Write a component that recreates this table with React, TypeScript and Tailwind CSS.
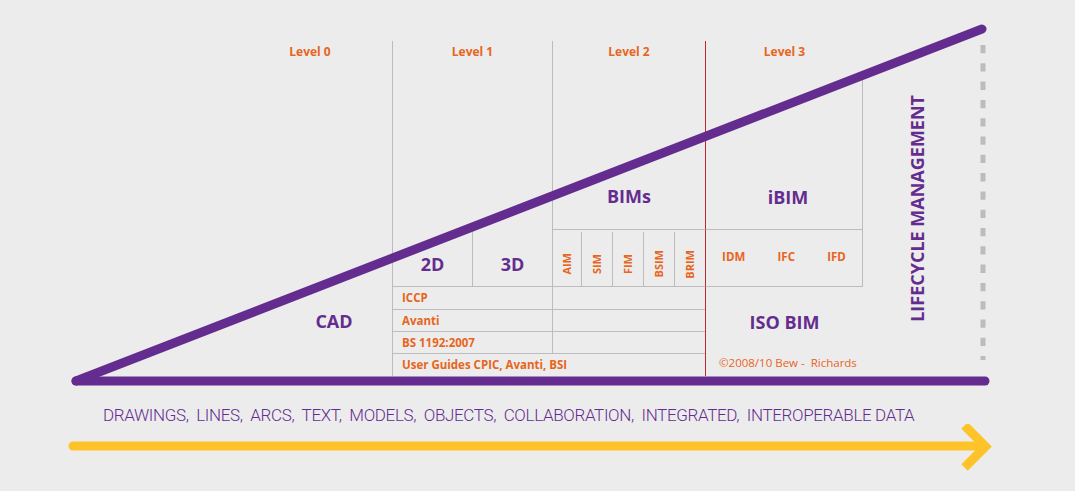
import React from "react";

const PURPLE = "text-[#652c90]";
const ORANGE = "text-[#e8651c]";

function Small({ children, className = "" }: { children: React.ReactNode; className?: string }) {
    return <span className={`font-bold leading-[14px] text-[#e8651c] ${className}`}>{children}</span>;
}

function Big({ children, className = "" }: { children: React.ReactNode; className?: string }) {
    return <span className={`text-[18px] font-bold leading-6 text-[#652c90] ${className}`}>{children}</span>;
}

function LevelLabel({ children }: { children: React.ReactNode }) {
    return <p className={`pt-[3px] text-center text-[12px] font-bold leading-4 ${ORANGE}`}>{children}</p>;
}

const subModels = ["AIM", "SIM", "FIM", "BSIM", "BRIM"];
const standards = ["IDM", "IFC", "IFD"];

export default function App() {
    return (
        <div
            className="flex h-[491px] w-[1075px] flex-col overflow-hidden bg-[#ececec]"
            style={{ fontFamily: '"Open Sans", "Noto Sans", sans-serif' }}
        >
            <div className="relative h-[392px] pt-[41px]">
                <div className="grid h-[335px] grid-cols-[392px_80px_80px_153px_158px_1fr] grid-rows-[188px_57px_23px_22px_22px_23px]">
                    {/* Level 0 */}
                    <div className="col-start-1 row-span-6 row-start-1 flex flex-col">
                        <div className="ml-[270px] w-[80px]">
                            <LevelLabel>Level 0</LevelLabel>
                        </div>
                        <div className="mb-[42px] ml-[300px] mt-auto w-[68px] text-center">
                            <Big>CAD</Big>
                        </div>
                    </div>

                    {/* Level 1 */}
                    <div className="col-span-2 col-start-2 row-start-1 border-l border-[#bcbcbc]">
                        <LevelLabel>Level 1</LevelLabel>
                    </div>
                    <div className="col-start-2 row-start-2 flex items-center justify-center border-l border-[#bcbcbc] pt-[12px]">
                        <Big>2D</Big>
                    </div>
                    <div className="col-start-3 row-start-2 flex items-center justify-center border-l border-[#bcbcbc] pt-[12px]">
                        <Big>3D</Big>
                    </div>
                    <div className="col-span-2 col-start-2 row-start-3 flex items-center border-l border-t border-[#bcbcbc] pl-[9px]">
                        <Small className="text-[11.5px]">ICCP</Small>
                    </div>
                    <div className="col-span-2 col-start-2 row-start-4 flex items-center border-l border-t border-[#bcbcbc] pl-[9px]">
                        <Small className="text-[11.5px]">Avanti</Small>
                    </div>
                    <div className="col-span-2 col-start-2 row-start-5 flex items-center border-l border-t border-[#bcbcbc] pl-[9px]">
                        <Small className="text-[11.5px]">BS 1192:2007</Small>
                    </div>
                    <div className="col-span-3 col-start-2 row-start-6 flex items-center border-l border-t border-[#bcbcbc] pl-[9px]">
                        <Small className="text-[11.5px]">User Guides CPIC, Avanti, BSI</Small>
                    </div>

                    {/* Level 2 */}
                    <div className="col-start-4 row-start-1 flex flex-col border-l border-[#bcbcbc]">
                        <LevelLabel>Level 2</LevelLabel>
                        <div className="mb-[20px] mt-auto text-center">
                            <Big>BIMs</Big>
                        </div>
                    </div>
                    <div className="col-start-4 row-start-2 grid grid-cols-[28px_31px_31px_31px_31px] border-l border-t border-[#bcbcbc]">
                        {subModels.map((m, i) => (
                            <div
                                key={m}
                                className={`mt-[2px] flex items-center justify-center pt-[10px] ${i > 0 ? "border-l border-[#bcbcbc]" : ""}`}
                            >
                                <Small className="rotate-180 text-[11px] [writing-mode:vertical-rl]">{m}</Small>
                            </div>
                        ))}
                    </div>
                    <div className="col-start-4 row-start-3 border-l border-t border-[#bcbcbc]" />
                    <div className="col-start-4 row-start-4 border-l border-t border-[#bcbcbc]" />
                    <div className="col-start-4 row-start-5 border-l border-t border-[#bcbcbc]" />

                    {/* Level 3 */}
                    <div className="col-start-5 row-start-1 flex flex-col border-l border-[#c1272d]">
                        <div className="h-[39px]">
                            <LevelLabel>Level 3</LevelLabel>
                        </div>
                        <div className="flex flex-1 items-end justify-center border-r border-[#bcbcbc] pb-[20px] pl-[8px]">
                            <Big>iBIM</Big>
                        </div>
                    </div>
                    <div className="col-start-5 row-start-2 flex items-center justify-around border-l border-r border-t border-[#bcbcbc] border-l-[#c1272d] pb-[2px]">
                        {standards.map((s) => (
                            <Small key={s} className="text-[11.5px]">
                                {s}
                            </Small>
                        ))}
                    </div>
                    <div className="col-start-5 row-span-4 row-start-3 flex flex-col border-l border-t border-[#bcbcbc] border-l-[#c1272d]">
                        <div className="pt-[23px] text-center">
                            <Big>ISO BIM</Big>
                        </div>
                        <p className={`mt-[21px] pl-[13px] text-[11.5px] leading-[14px] ${ORANGE}`}>©2008/10 Bew -&nbsp; Richards</p>
                    </div>

                    {/* Lifecycle */}
                    <div className="col-start-6 row-span-6 row-start-1 flex items-center pl-[44px]">
                        <span className={`rotate-180 text-[18px] font-bold leading-[20px] [writing-mode:vertical-rl] ${PURPLE}`}>
                            LIFECYCLE MANAGEMENT
                        </span>
                    </div>
                </div>

                {/* wedge drawing */}
                <svg className="pointer-events-none absolute inset-0" width="1075" height="392" viewBox="0 0 1075 392">
                    <line x1="983" y1="45" x2="983" y2="360" stroke="#bcbcbc" strokeWidth="5" strokeDasharray="8.3 10" />
                    <line x1="76" y1="381" x2="985" y2="381" stroke="#652c90" strokeWidth="9" strokeLinecap="round" />
                    <line x1="76" y1="381" x2="982" y2="29" stroke="#652c90" strokeWidth="9" strokeLinecap="round" />
                </svg>
            </div>

            <p
                className={`mt-[14px] pl-[103px] text-[17px] font-light leading-[18px] tracking-[-0.35px] ${PURPLE}`}
                style={{ fontFamily: 'Roboto, "Open Sans", sans-serif' }}
            >
                DRAWINGS,&nbsp; LINES,&nbsp; ARCS,&nbsp; TEXT,&nbsp; MODELS,&nbsp; OBJECTS,&nbsp; COLLABORATION,&nbsp; INTEGRATED,&nbsp;
                INTEROPERABLE DATA
            </p>

            <svg width="1075" height="60" viewBox="0 0 1075 60" className="block">
                <line x1="73" y1="22" x2="984" y2="22" stroke="#fdc328" strokeWidth="9" strokeLinecap="round" />
                <polyline
                    points="964.5,1.5 985.5,22.5 964.5,43.5"
                    fill="none"
                    stroke="#fdc328"
                    strokeWidth="9"
                    strokeLinejoin="miter"
                    strokeLinecap="butt"
                />
            </svg>
        </div>
    );
}
